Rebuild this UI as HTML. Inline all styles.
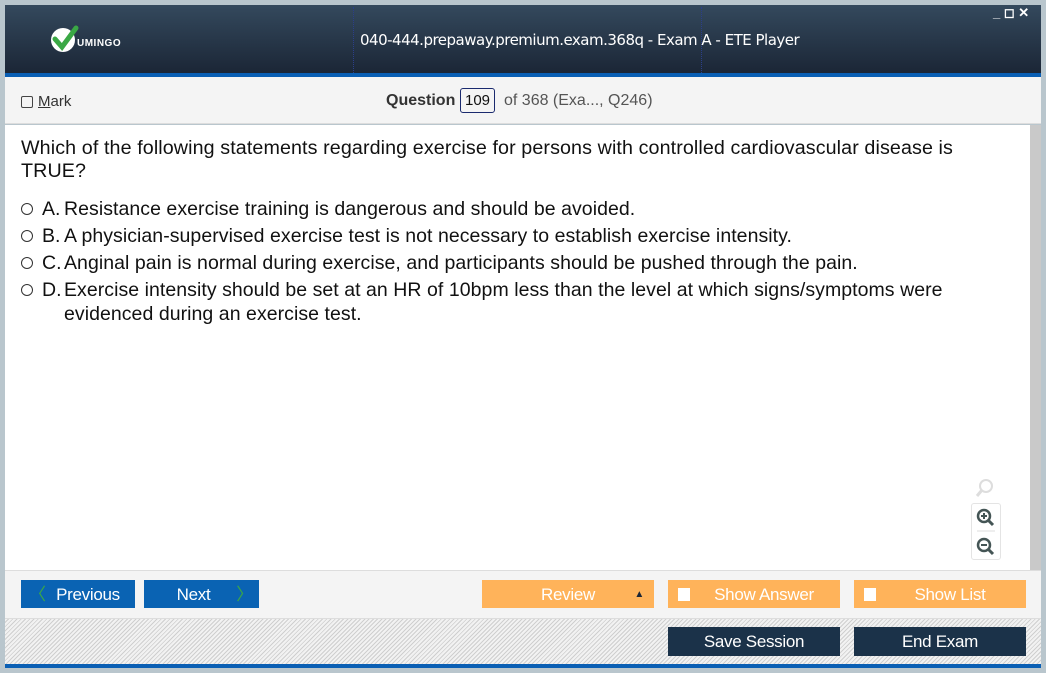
<!DOCTYPE html>
<html><head><meta charset="utf-8"><style>
*{margin:0;padding:0;box-sizing:border-box}
body{width:1046px;height:673px;background:#b9c6cd;position:relative;overflow:hidden;font-family:"Liberation Sans",sans-serif}
.abs{position:absolute}
#hdr{left:5px;top:5px;width:1036px;height:68px;background:linear-gradient(#34495d,#1b2636)}
#blue1{left:5px;top:73px;width:1036px;height:4px;background:#0a5fb4}
#tb{left:5px;top:77px;width:1036px;height:47px;background:#f4f4f4;border-bottom:1px solid #ddd}
#ct{left:5px;top:125px;width:1025px;height:445px;background:#fff}
#sb{left:1030px;top:125px;width:11px;height:445px;background:#c9c9c9}
#bb{left:5px;top:570px;width:1036px;height:48px;background:#f4f4f4;border-top:1px solid #ddd}
#hatch{left:5px;top:618px;width:1036px;height:46px;border-top:1px solid #ddd;background:repeating-linear-gradient(135deg,#f2f2f2 0 2px,#cfcfcf 2px 3px)}
#blue2{left:5px;top:664px;width:1036px;height:4px;background:#0a5fb4}
.btn{position:absolute;height:28px;color:#fff;font-size:17px;line-height:30px;text-align:center;font-family:"Liberation Sans",sans-serif;letter-spacing:-0.3px}
.q{font-family:"Liberation Sans",sans-serif;font-size:19.7px;color:#111;position:absolute;left:21px;letter-spacing:0.1px}
.opt{position:absolute;left:21px;font-family:"Liberation Sans",sans-serif;font-size:19.5px;color:#111;line-height:24px;letter-spacing:0.05px}
.rad{position:absolute;left:0;top:6px;width:12px;height:12px;border:1px solid #333;border-radius:50%}
.lt{position:absolute;left:21px;top:0}
.tx{padding-left:43px;display:block}
.cb{position:absolute;width:12px;height:13px;background:#fff;top:8px}
</style></head><body>
<div id="hdr" class="abs"></div>
<div class="abs" style="left:353px;top:7px;width:1px;height:66px;border-left:1px dotted #2b3f8a"></div>
<div class="abs" style="left:701px;top:7px;width:1px;height:66px;border-left:1px dotted #2b3f8a"></div>
<svg class="abs" style="left:50px;top:25px" width="30" height="28" viewBox="0 0 30 28"><circle cx="13" cy="15" r="12" fill="#fff"/><path d="M5 14 L12 22 L26 3" stroke="#3aa845" stroke-width="5" fill="none" stroke-linecap="round"/></svg>
<div class="abs" style="left:77px;top:38px;color:#fff;font-size:10px;font-weight:bold;letter-spacing:0.5px">UMINGO</div>
<div class="abs" style="left:360px;top:31px;color:#fff;font-size:15px;font-family:'DejaVu Sans',sans-serif;letter-spacing:-0.5px">040-444.prepaway.premium.exam.368q - Exam A - ETE Player</div>
<div class="abs" style="left:993px;top:5px;color:#fff;font-size:13px;font-weight:bold">_ ◻ ✕</div>
<div id="blue1" class="abs"></div>
<div id="tb" class="abs"></div>
<div class="abs" style="left:21px;top:96px;width:12px;height:12px;border:1px solid #444;border-radius:2px"></div>
<div class="abs" style="left:38px;top:93px;font-size:15px;color:#333"><u>M</u>ark</div>
<div class="abs" style="left:386px;top:92px;font-size:16px;color:#333;font-weight:bold">Question</div>
<div class="abs" style="left:460px;top:88px;width:35px;height:25px;border:1px solid #1a2a6e;border-radius:3px;font-size:15px;color:#111;text-align:center;line-height:24px">109</div>
<div class="abs" style="left:504px;top:92px;font-size:16px;color:#555">of 368 (Exa..., Q246)</div>
<div id="ct" class="abs"></div>
<div id="sb" class="abs"></div>
<div class="q" style="top:137px;line-height:23px;width:945px">Which of the following statements regarding exercise for persons with controlled cardiovascular disease is TRUE?</div>
<div class="opt" style="top:197px;width:960px"><span class="rad"></span><span class="lt">A.</span><span class="tx">Resistance exercise training is dangerous and should be avoided.</span></div>
<div class="opt" style="top:224px;width:960px"><span class="rad"></span><span class="lt">B.</span><span class="tx">A physician-supervised exercise test is not necessary to establish exercise intensity.</span></div>
<div class="opt" style="top:251px;width:960px"><span class="rad"></span><span class="lt">C.</span><span class="tx">Anginal pain is normal during exercise, and participants should be pushed through the pain.</span></div>
<div class="opt" style="top:278px;width:945px"><span class="rad"></span><span class="lt">D.</span><span class="tx">Exercise intensity should be set at an HR of 10bpm less than the level at which signs/symptoms were evidenced during an exercise test.</span></div>
<svg class="abs" style="left:975px;top:478px" width="20" height="20"><circle cx="11" cy="8" r="6" fill="none" stroke="#ddd" stroke-width="2"/><path d="M7 12 L2 18" stroke="#ddd" stroke-width="3"/></svg>
<div class="abs" style="left:971px;top:503px;width:30px;height:57px;border:1px solid #e4e4e4;border-radius:3px;background:#fff"></div>
<svg class="abs" style="left:975px;top:507px" width="22" height="50"><circle cx="9" cy="9" r="6" fill="none" stroke="#455" stroke-width="2.5"/><path d="M6 9h6M9 6v6" stroke="#455" stroke-width="2"/><path d="M13 13 L18 18" stroke="#455" stroke-width="3"/><path d="M2 24h18" stroke="#ddd"/><circle cx="9" cy="38" r="6" fill="none" stroke="#455" stroke-width="2.5"/><path d="M6 38h6" stroke="#455" stroke-width="2"/><path d="M13 42 L18 47" stroke="#455" stroke-width="3"/></svg>
<div id="bb" class="abs"></div>
<div class="btn" style="left:21px;top:580px;width:114px;background:#0a63b3"><span style="position:absolute;left:8px;color:#3aa845">〈</span><span style="padding-left:20px">Previous</span></div>
<div class="btn" style="left:144px;top:580px;width:115px;background:#0a63b3"><span style="padding-right:16px">Next</span><span style="position:absolute;right:6px;color:#3aa845">〉</span></div>
<div class="btn" style="left:482px;top:580px;width:172px;background:#ffb35a">Review<span style="position:absolute;right:10px;color:#1b2636;font-size:10px">▲</span></div>
<div class="btn" style="left:668px;top:580px;width:172px;background:#ffb35a"><span class="cb" style="left:10px"></span><span style="padding-left:20px">Show Answer</span></div>
<div class="btn" style="left:854px;top:580px;width:172px;background:#ffb35a"><span class="cb" style="left:10px"></span><span style="padding-left:20px">Show List</span></div>
<div id="hatch" class="abs"></div>
<div class="btn" style="left:668px;top:627px;width:172px;height:29px;background:#1b3249">Save Session</div>
<div class="btn" style="left:854px;top:627px;width:172px;height:29px;background:#1b3249">End Exam</div>
<div id="blue2" class="abs"></div>
</body></html>
